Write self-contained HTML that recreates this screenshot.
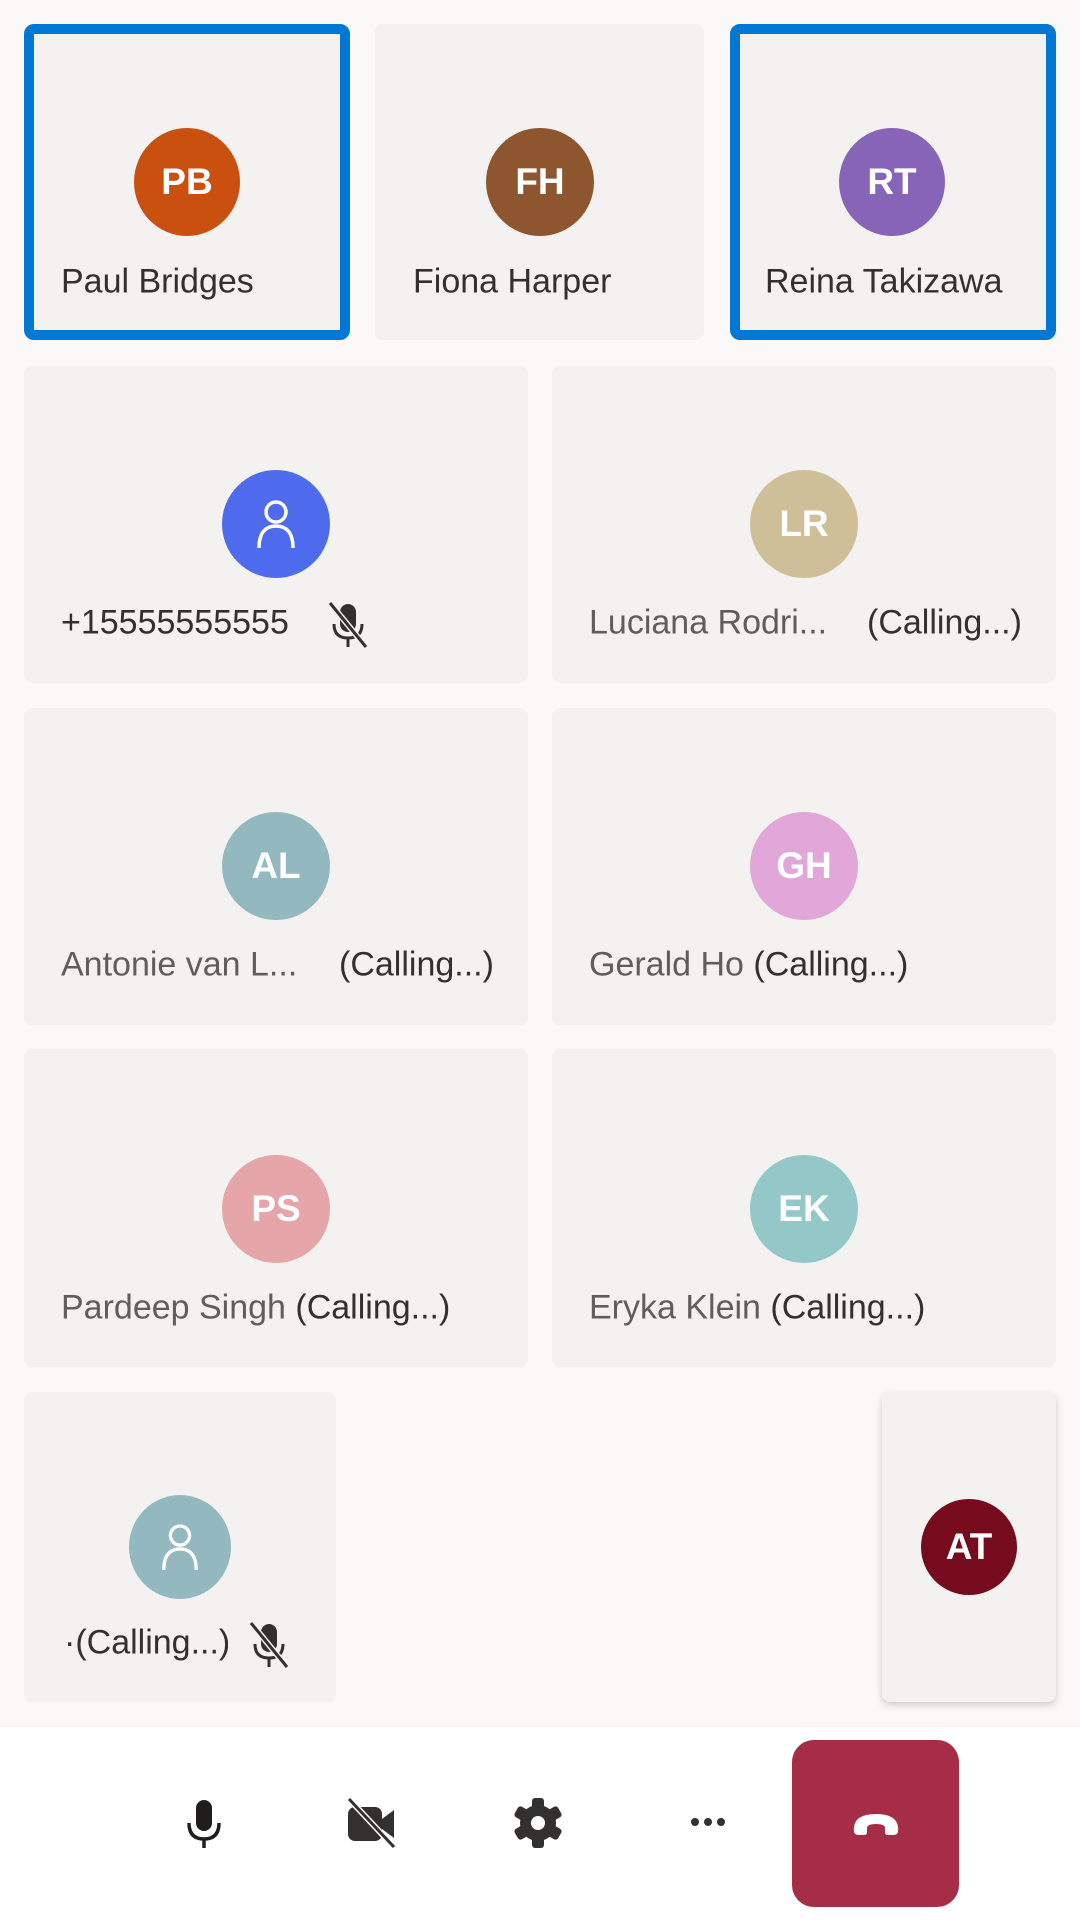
<!DOCTYPE html>
<html><head><meta charset="utf-8"><style>
*{margin:0;padding:0;box-sizing:border-box}
body{width:1080px;height:1920px;background:#faf9f8;font-family:"Liberation Sans",sans-serif;position:relative;overflow:hidden}
.t{position:absolute;background:#f3f2f1;border-radius:8px}
.sel{border:10px solid #0078d4;border-radius:10px}
.av{position:absolute;border-radius:50%;color:#fff;display:flex;align-items:center;justify-content:center;font-size:37px;font-weight:bold;transform:translate(-50%,-50%)}
.n{position:absolute;font-size:34px;color:#323130;white-space:nowrap;transform:translateY(-50%)}
.g{color:#605e5c}
.bar{position:absolute;left:0;top:1727px;width:1080px;height:193px;background:#fff}
svg{position:absolute}
</style></head><body>
<div class="t sel" style="left:24px;top:24px;width:326px;height:316px"></div>
<div class="t" style="left:375px;top:24px;width:329px;height:316px"></div>
<div class="t sel" style="left:730px;top:24px;width:326px;height:316px"></div>
<div class="av" style="left:187px;top:182px;width:106px;height:108px;background:#ca5010">PB</div>
<div class="av" style="left:540px;top:182px;width:108px;height:108px;background:#8e562e">FH</div>
<div class="av" style="left:892px;top:182px;width:106px;height:108px;background:#8764b8">RT</div>
<div class="n" style="left:61px;top:282px">Paul Bridges</div>
<div class="n" style="left:413px;top:282px">Fiona Harper</div>
<div class="n" style="left:765px;top:282px">Reina Takizawa</div>

<div class="t" style="left:24px;top:366px;width:504px;height:317px"></div>
<div class="t" style="left:552px;top:366px;width:504px;height:317px"></div>
<div class="av" style="left:276px;top:524px;width:108px;height:108px;background:#4f6bed">
<svg style="position:static" width="44" height="52" viewBox="0 0 44 52"><circle cx="22" cy="14" r="10" fill="none" stroke="#fff" stroke-width="3.5"/><path d="M5 50 C5 34 12 28 22 28 C32 28 39 34 39 50" fill="none" stroke="#fff" stroke-width="3.5"/></svg></div>
<div class="av" style="left:804px;top:524px;width:108px;height:108px;background:#cfbf98">LR</div>
<div class="n" style="left:61px;top:623px">+15555555555</div>
<svg style="left:327px;top:600px" width="42" height="50" viewBox="0 0 42 50"><rect x="13" y="4" width="16" height="28" rx="8" fill="#323130"/><path d="M7 24 Q7 38 21 38 Q35 38 35 24" fill="none" stroke="#323130" stroke-width="3"/><path d="M21 38 V47" stroke="#323130" stroke-width="3"/><path d="M3 3 L39 47" stroke="#f3f2f1" stroke-width="6"/><path d="M3 3 L39 47" stroke="#323130" stroke-width="3"/></svg>
<div class="n g" style="left:589px;top:623px">Luciana Rodri...</div>
<div class="n" style="left:867px;top:623px">(Calling...)</div>

<div class="t" style="left:24px;top:708px;width:504px;height:317px"></div>
<div class="t" style="left:552px;top:708px;width:504px;height:317px"></div>
<div class="av" style="left:276px;top:866px;width:108px;height:108px;background:#93b8c0">AL</div>
<div class="av" style="left:804px;top:866px;width:108px;height:108px;background:#e0a7d8">GH</div>
<div class="n g" style="left:61px;top:965px">Antonie van L...</div>
<div class="n" style="left:339px;top:965px">(Calling...)</div>
<div class="n" style="left:589px;top:965px"><span class="g">Gerald Ho</span> (Calling...)</div>

<div class="t" style="left:24px;top:1049px;width:504px;height:318px"></div>
<div class="t" style="left:552px;top:1049px;width:504px;height:318px"></div>
<div class="av" style="left:276px;top:1209px;width:108px;height:108px;background:#e6a5a8">PS</div>
<div class="av" style="left:804px;top:1209px;width:108px;height:108px;background:#94c8c8">EK</div>
<div class="n" style="left:61px;top:1308px"><span class="g">Pardeep Singh</span> (Calling...)</div>
<div class="n" style="left:589px;top:1308px"><span class="g">Eryka Klein</span> (Calling...)</div>

<div class="t" style="left:24px;top:1392px;width:312px;height:310px"></div>
<div class="av" style="left:180px;top:1547px;width:102px;height:104px;background:#93b8c0">
<svg style="position:static" width="42" height="50" viewBox="0 0 44 52"><circle cx="22" cy="14" r="10" fill="none" stroke="#fff" stroke-width="3.5"/><path d="M5 50 C5 34 12 28 22 28 C32 28 39 34 39 50" fill="none" stroke="#fff" stroke-width="3.5"/></svg></div>
<div class="n" style="left:64px;top:1643px">·(Calling...)</div>
<svg style="left:248px;top:1620px" width="42" height="50" viewBox="0 0 42 50"><rect x="13" y="4" width="16" height="28" rx="8" fill="#323130"/><path d="M7 24 Q7 38 21 38 Q35 38 35 24" fill="none" stroke="#323130" stroke-width="3"/><path d="M21 38 V47" stroke="#323130" stroke-width="3"/><path d="M3 3 L39 47" stroke="#f3f2f1" stroke-width="6"/><path d="M3 3 L39 47" stroke="#323130" stroke-width="3"/></svg>

<div class="t" style="left:882px;top:1392px;width:174px;height:310px;box-shadow:0 3px 8px rgba(0,0,0,.18)"></div>
<div class="av" style="left:969px;top:1547px;width:96px;height:96px;background:#750b1c">AT</div>

<div class="bar"></div>
<svg style="left:186px;top:1799px" width="36" height="50" viewBox="0 0 36 50"><rect x="10" y="1" width="16" height="31" rx="8" fill="#1f1e1d"/><path d="M3 24 Q3 40 18 40 Q33 40 33 24" fill="none" stroke="#1f1e1d" stroke-width="3.5"/><path d="M18 40 V49" stroke="#1f1e1d" stroke-width="3.5"/></svg>
<svg style="left:346px;top:1797px" width="52" height="52" viewBox="0 0 52 52"><rect x="2" y="10" width="34" height="34" rx="7" fill="#323130"/><path d="M36 22 L48 13 V41 L36 32 Z" fill="#323130"/><path d="M3 2 L48 50" stroke="#fff" stroke-width="6"/><path d="M3 2 L48 50" stroke="#323130" stroke-width="3"/></svg>
<svg style="left:512px;top:1797px" width="52" height="52" viewBox="0 0 52 52"><g fill="#323130"><circle cx="26" cy="26" r="18"/><rect x="20" y="1" width="12" height="50" rx="3"/><rect x="20" y="1" width="12" height="50" rx="3" transform="rotate(60 26 26)"/><rect x="20" y="1" width="12" height="50" rx="3" transform="rotate(120 26 26)"/></g><circle cx="26" cy="26" r="7" fill="#fff"/></svg>
<svg style="left:688px;top:1814px" width="40" height="16" viewBox="0 0 40 16"><circle cx="7" cy="8" r="4" fill="#323130"/><circle cx="20" cy="8" r="4" fill="#323130"/><circle cx="33" cy="8" r="4" fill="#323130"/></svg>
<div style="position:absolute;left:792px;top:1740px;width:167px;height:167px;background:#a52d45;border-radius:22px"></div>
<svg style="left:850px;top:1810px" width="52" height="28" viewBox="0 0 52 28"><path d="M4 22 Q2 4 26 4 Q50 4 48 22 Q47 25 43 25 H38 Q35 25 35 22 V18 Q35 14 26 14 Q17 14 17 18 V22 Q17 25 14 25 H9 Q5 25 4 22 Z" fill="#fff"/></svg>
</body></html>
